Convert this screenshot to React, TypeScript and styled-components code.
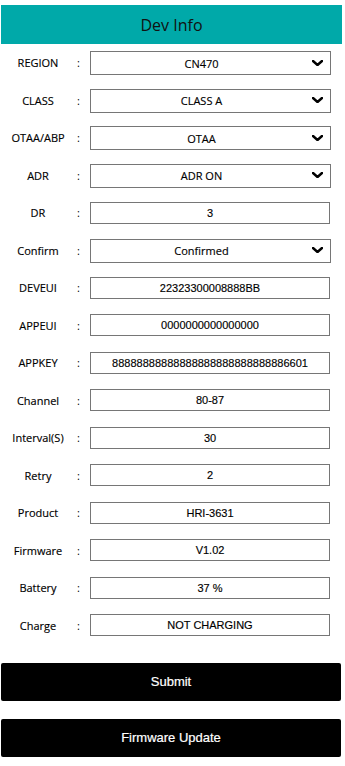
import React from "react";
import styled, { createGlobalStyle } from "styled-components";

const GlobalStyle = createGlobalStyle`
  html, body { margin: 0; padding: 0; background: #fff; }
  body { font-family: "Open Sans", "Noto Sans", sans-serif; color: #000; }
  * { box-sizing: border-box; }
`;

const Page = styled.div`
  width: 345px;
  padding-top: 5px;
  display: flex;
  flex-direction: column;
`;

const Header = styled.h1`
  margin: 0 3px 0 1px;
  height: 39px;
  background: #00a9a9;
  color: #111;
  font-family: "Open Sans", "Noto Sans", sans-serif;
  font-weight: 400;
  font-size: 16px;
  display: flex;
  align-items: center;
  justify-content: center;
`;

const Form = styled.form`
  display: flex;
  flex-direction: column;
`;

const Row = styled.div`
  display: grid;
  grid-template-columns: 76px 14px 241px;
  align-items: center;
  height: 37.5px;
`;

const Label = styled.label`
  text-align: center;
  font-size: 11px;
  white-space: nowrap;
  -webkit-text-stroke: 0.15px #000;
`;

const Colon = styled.span`
  font-size: 11px;
  text-align: left;
  padding-left: 1px;
`;

const SelectWrap = styled.div`
  position: relative;
  width: 241px;
  height: 24px;
`;

const Select = styled.select`
  appearance: none;
  -webkit-appearance: none;
  width: 100%;
  height: 100%;
  border: 1px solid #767676;
  border-radius: 0;
  background: #fff;
  color: #000;
  font-family: "Open Sans", "Noto Sans", sans-serif;
  font-size: 11px;
  text-align: center;
  text-align-last: center;
  padding: 0 18px 0 0;
  margin: 0;
  outline: none;
  -webkit-text-stroke: 0.15px #000;
`;

const Chevron = styled.svg`
  position: absolute;
  right: 8px;
  top: 9px;
  width: 11px;
  height: 6px;
  pointer-events: none;
`;

const Input = styled.input`
  width: 240px;
  height: 22px;
  border: 1px solid #767676;
  border-radius: 0;
  padding: 0;
  margin: 0;
  text-align: center;
  font-family: "Liberation Sans", Arial, sans-serif;
  font-size: 11px;
  color: #000;
  background: #fff;
  outline: none;
  -webkit-text-stroke: 0.15px #000;
`;

const Buttons = styled.div`
  display: flex;
  flex-direction: column;
  gap: 18px;
  margin-top: 19px;
  padding-left: 1px;
`;

const Button = styled.button`
  width: 340px;
  height: 38px;
  border: none;
  border-radius: 2px;
  background: #000;
  color: #fff;
  font-family: "Liberation Sans", Arial, sans-serif;
  font-size: 13px;
  padding: 0 0 2px;
  -webkit-text-stroke: 0.2px #fff;
  cursor: pointer;
`;

type Field =
  | { label: string; kind: "select"; value: string; options: string[] }
  | { label: string; kind: "input"; value: string };

const fields: Field[] = [
  { label: "REGION", kind: "select", value: "CN470", options: ["CN470", "EU868", "US915", "AS923"] },
  { label: "CLASS", kind: "select", value: "CLASS A", options: ["CLASS A", "CLASS C"] },
  { label: "OTAA/ABP", kind: "select", value: "OTAA", options: ["OTAA", "ABP"] },
  { label: "ADR", kind: "select", value: "ADR ON", options: ["ADR ON", "ADR OFF"] },
  { label: "DR", kind: "input", value: "3" },
  { label: "Confirm", kind: "select", value: "Confirmed", options: ["Confirmed", "Unconfirmed"] },
  { label: "DEVEUI", kind: "input", value: "22323300008888BB" },
  { label: "APPEUI", kind: "input", value: "0000000000000000" },
  { label: "APPKEY", kind: "input", value: "88888888888888888888888888886601" },
  { label: "Channel", kind: "input", value: "80-87" },
  { label: "Interval(S)", kind: "input", value: "30" },
  { label: "Retry", kind: "input", value: "2" },
  { label: "Product", kind: "input", value: "HRI-3631" },
  { label: "Firmware", kind: "input", value: "V1.02" },
  { label: "Battery", kind: "input", value: "37 %" },
  { label: "Charge", kind: "input", value: "NOT CHARGING" },
];

export default function App() {
  return (
    <Page>
      <GlobalStyle />
      <Header>Dev Info</Header>
      <Form onSubmit={(e) => e.preventDefault()}>
        {fields.map((f) => (
          <Row key={f.label}>
            <Label>{f.label}</Label>
            <Colon>:</Colon>
            {f.kind === "select" ? (
              <SelectWrap>
                <Select defaultValue={f.value}>
                  {f.options.map((o) => (
                    <option key={o} value={o}>
                      {o}
                    </option>
                  ))}
                </Select>
                <Chevron viewBox="0 0 11 6">
                  <polyline
                    points="1,1 5.5,5 10,1"
                    fill="none"
                    stroke="#000"
                    strokeWidth="2.4"
                    strokeLinecap="round"
                    strokeLinejoin="round"
                  />
                </Chevron>
              </SelectWrap>
            ) : (
              <Input defaultValue={f.value} />
            )}
          </Row>
        ))}
      </Form>
      <Buttons>
        <Button type="button">Submit</Button>
        <Button type="button">Firmware Update</Button>
      </Buttons>
    </Page>
  );
}
